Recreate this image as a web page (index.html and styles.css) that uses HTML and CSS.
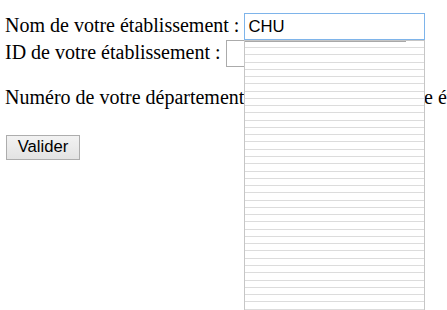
FILE: index.html
```html
<!DOCTYPE html>
<html lang="fr">
<head>
<meta charset="utf-8">
<title>Établissement</title>
<link rel="stylesheet" href="styles.css">
</head>
<body>
<form class="form">
  <div class="row">
    <label class="label" for="nom">Nom de votre établissement :</label>
    <span class="field">
      <input class="input input-focus" id="nom" type="text" value="CHU">
      <ul class="suggest">
        <li></li><li></li><li></li><li></li><li></li><li></li><li></li><li></li><li></li><li></li>
        <li></li><li></li><li></li><li></li><li></li><li></li><li></li><li></li><li></li><li></li>
        <li></li><li></li><li></li><li></li><li></li><li></li><li></li><li></li><li></li><li></li>
        <li></li><li></li><li></li><li></li><li></li><li></li><li></li><li></li>
      </ul>
    </span>
  </div>
  <div class="row">
    <label class="label" for="id">ID de votre établissement :</label>
    <input class="input" id="id" type="text">
  </div>
  <div class="row row-dept">
    <label class="label" for="dep">Numéro de votre département :</label>
    <input class="input input-small" id="dep" type="text">
    <span class="label">de votre établissement</span>
  </div>
  <div class="actions">
    <button class="button" type="button">Valider</button>
  </div>
</form>
</body>
</html>
```
FILE: styles.css
```css
html {
  margin: 0;
  padding: 0;
}
body {
  box-sizing: border-box;
  height: 310px;
  margin: 0;
  padding: 13px 0 0 5px;
  font-family: "Liberation Serif", "Times New Roman", serif;
  font-size: 20px;
  color: #000;
  background: #fff;
  overflow: hidden;
}
.form {
  margin: 0;
}
.row {
  display: flex;
  align-items: baseline;
  gap: 5px;
  white-space: nowrap;
}
.label {
  line-height: 23px;
}
.field {
  position: relative;
  display: inline-block;
}
.input {
  box-sizing: border-box;
  width: 181px;
  height: 27px;
  margin: 0;
  padding: 0 3px;
  border: 1px solid #ababab;
  font-family: "Liberation Sans", Arial, sans-serif;
  font-size: 16.67px;
  color: #000;
  background: #fff;
  outline: none;
}
.input-focus {
  border-color: #7eb4ea;
}
.input-small {
  width: 103px;
  flex: none;
}
.row-dept {
  margin-top: 18px;
}
.suggest {
  position: absolute;
  left: 0;
  top: 100%;
  width: 181px;
  height: 270px;
  box-sizing: border-box;
  margin: 0;
  padding: 0;
  list-style: none;
  background: #fff;
  border: 1px solid #c6c6c6;
  border-bottom: 0;
  overflow: hidden;
  z-index: 5;
}
.suggest::before {
  content: "";
  position: absolute;
  left: 0;
  top: 0;
  width: 161px;
  height: 1px;
  background: #a8a8a8;
}
.suggest li {
  height: 6.27px;
  border-bottom: 1px solid #dcdcdc;
}
.suggest li:first-child {
  height: 6px;
}
.actions {
  margin-top: 22px;
  padding-left: 1px;
}
.button {
  box-sizing: border-box;
  width: 74px;
  height: 25px;
  margin: 0;
  padding: 0;
  border: 1px solid #adadad;
  background: linear-gradient(#f2f2f2, #e3e3e3);
  font-family: "Liberation Sans", Arial, sans-serif;
  font-size: 16.67px;
  color: #000;
}
```
